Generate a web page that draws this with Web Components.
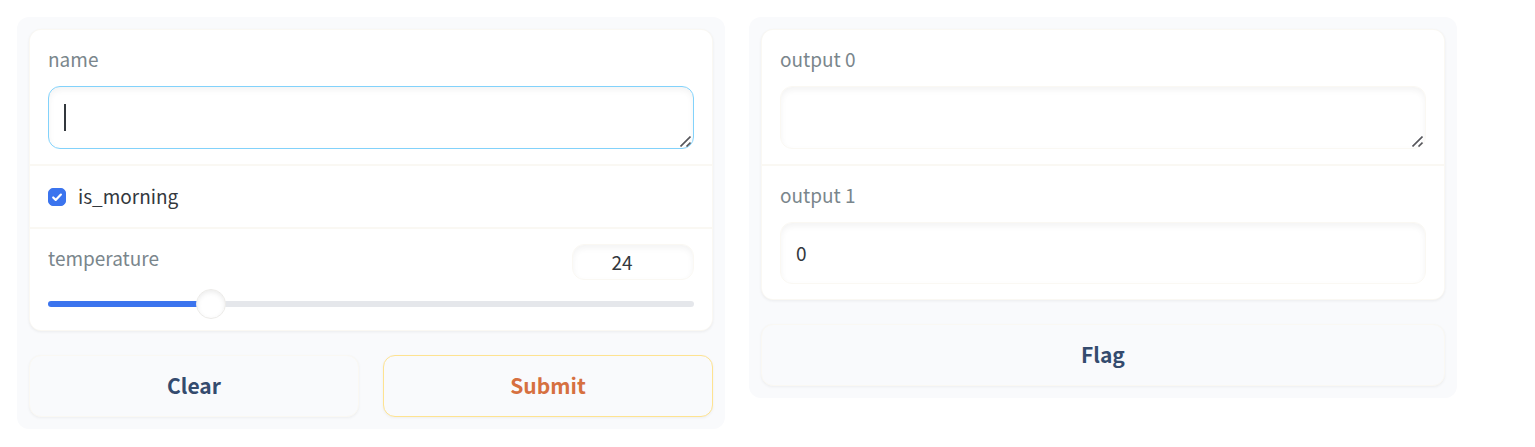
<!DOCTYPE html>
<html lang="en">
<head>
<meta charset="utf-8">
<meta name="viewport" content="width=device-width, initial-scale=1">
<title>Interface</title>
<style>
  body {
    margin: 0;
    background: #fff;
    color: #33383d;
    font-family: "Noto Sans CJK SC", "Noto Sans", sans-serif;
    font-size: 19px;
    line-height: 28px;
    --line: #faf8f3;
    --muted: #7a868c;
    --accent: #3b74ee;
    --inset: inset 0 3px 6px 0 rgba(0, 0, 0, .05);
  }
</style>
</head>
<body>
<demo-interface></demo-interface>
<script>
const define = (name, html, setup) => {
  const template = document.createElement('template');
  template.innerHTML = html;
  customElements.define(name, class extends HTMLElement {
    constructor() {
      super();
      this.attachShadow({ mode: 'open' }).append(template.content.cloneNode(true));
    }
    connectedCallback() {
      if (setup) setup(this, this.shadowRoot);
    }
  });
};

define('ui-panel', `
  <style>
    :host { display: block; flex: 1 1 0; min-width: 0; box-sizing: border-box; padding: 12px; border-radius: 12px; background: #f9fafc; }
    .form { display: flex; flex-direction: column; gap: 2px; overflow: hidden; border: 1px solid var(--line); border-radius: 12px; background: var(--line); box-shadow: 0 1px 3px rgba(0, 0, 0, .06); }
    .actions { display: flex; gap: 24px; margin-top: 24px; }
  </style>
  <div class="form"><slot></slot></div>
  <div class="actions"><slot name="actions"></slot></div>
`);

define('ui-button', `
  <style>
    :host { display: block; flex: 1 1 0; }
    button { display: block; box-sizing: border-box; width: 100%; height: 62px; padding: 0 0 2px; border: 1px solid var(--line); border-radius: 12px; background: #f9fafc; color: #344b6e; font: inherit; font-size: 21px; font-weight: 600; box-shadow: 0 1px 3px rgba(0, 0, 0, .05); cursor: pointer; }
    :host([primary]) button { border-color: #fee391; color: #d67040; }
  </style>
  <button type="button"><slot></slot></button>
`);

define('ui-textbox', `
  <style>
    :host { display: block; padding: 15px 18px; background: #fff; }
    label { display: block; margin-bottom: 13px; color: var(--muted); }
    .box { position: relative; }
    textarea { display: block; box-sizing: border-box; width: 100%; height: 63px; padding: 15px; border: 1px solid var(--line); border-radius: 12px; outline: 0; background: #fff; color: inherit; font: inherit; resize: none; box-shadow: var(--inset); caret-color: transparent; }
    .caret { display: none; position: absolute; left: 16px; top: 18px; width: 2px; height: 27px; background: #33383d; }
    svg { position: absolute; right: 3px; bottom: 2px; width: 11px; height: 11px; }
    :host([active]) textarea { border-color: #82d2fb; }
    :host([active]) .caret { display: block; }
  </style>
  <label for="field"></label>
  <div class="box">
    <textarea id="field" rows="1"></textarea>
    <span class="caret"></span>
    <svg viewBox="0 0 11 11" fill="none" stroke="#56565b" stroke-width="1.6" aria-hidden="true"><path d="M.5 10.5 10.5.5M6.5 10.5l4-4"/></svg>
  </div>
`, (host, root) => {
  root.querySelector('label').textContent = host.getAttribute('label');
});

define('ui-number', `
  <style>
    :host { display: block; padding: 15px 18px; background: #fff; }
    label { display: block; margin-bottom: 13px; color: var(--muted); }
    input { display: block; box-sizing: border-box; width: 100%; height: 62px; padding: 0 15px 2px; border: 1px solid var(--line); border-radius: 12px; outline: 0; background: #fff; color: inherit; font: inherit; box-shadow: var(--inset); appearance: textfield; }
    input::-webkit-inner-spin-button { appearance: none; margin: 0; }
  </style>
  <label for="field"></label>
  <input id="field" type="number">
`, (host, root) => {
  root.querySelector('label').textContent = host.getAttribute('label');
  root.querySelector('input').value = host.getAttribute('value');
});

define('ui-checkbox', `
  <style>
    :host { display: flex; align-items: center; box-sizing: border-box; height: 61px; padding: 0 18px; background: #fff; }
    label { display: flex; align-items: center; gap: 12px; }
    .tick { display: grid; width: 18px; height: 18px; }
    .text { padding-bottom: 2px; }
    input, svg { grid-area: 1 / 1; width: 18px; height: 18px; margin: 0; }
    input { appearance: none; border: 1px solid #d5d8dd; border-radius: 5px; box-sizing: border-box; }
    input:checked { border-color: var(--accent); background: var(--accent); }
    svg { visibility: hidden; pointer-events: none; }
    input:checked + svg { visibility: visible; }
  </style>
  <label>
    <span class="tick">
      <input type="checkbox" checked>
      <svg viewBox="0 0 18 18" fill="none" stroke="#fff" stroke-width="2.2" stroke-linecap="round" stroke-linejoin="round" aria-hidden="true"><path d="m5.2 9.5 2.5 2.4 5.2-5.3"/></svg>
    </span>
    <span class="text"><slot></slot></span>
  </label>
`);

define('ui-slider', `
  <style>
    :host { display: block; padding: 15px 18px 11px; background: #fff; }
    .head { display: flex; justify-content: space-between; align-items: flex-start; margin-bottom: 9px; }
    label { color: var(--muted); }
    input { display: block; box-sizing: border-box; margin: 0; outline: 0; }
    input[type=number] { width: 122px; height: 36px; padding: 0 22px 2px 0; border: 1px solid var(--line); border-radius: 12px; background: #fff; color: inherit; font: inherit; text-align: center; box-shadow: var(--inset); appearance: textfield; }
    input::-webkit-inner-spin-button { appearance: none; margin: 0; }
    input[type=range] { width: 100%; height: 30px; appearance: none; background: none; }
    input[type=range]::-webkit-slider-runnable-track { height: 6px; border-radius: 3px; background: linear-gradient(to right, var(--accent) var(--fill), #e5e7eb var(--fill)); }
    input[type=range]::-webkit-slider-thumb { appearance: none; width: 30px; height: 30px; margin-top: -12px; border: 1px solid #ecebe8; border-radius: 50%; background: #fff; box-shadow: inset 0 2px 5px rgba(0, 0, 0, .08); }
  </style>
  <div class="head">
    <label for="amount"></label>
    <input id="amount" type="number" min="0" max="100">
  </div>
  <input id="range" type="range" min="0" max="100">
`, (host, root) => {
  const amount = root.querySelector('#amount');
  const range = root.querySelector('#range');
  const label = host.getAttribute('label');
  const update = value => {
    amount.value = value;
    range.value = value;
    range.style.setProperty('--fill', value + '%');
  };
  root.querySelector('label').textContent = label;
  range.setAttribute('aria-label', label);
  amount.addEventListener('input', () => update(amount.value));
  range.addEventListener('input', () => update(range.value));
  update(host.getAttribute('value'));
});

define('demo-interface', `
  <style>
    :host { display: flex; align-items: flex-start; gap: 24px; padding: 17px 78px 17px 17px; }
  </style>
  <ui-panel>
    <ui-textbox label="name" active></ui-textbox>
    <ui-checkbox>is_morning</ui-checkbox>
    <ui-slider label="temperature" value="24"></ui-slider>
    <ui-button slot="actions">Clear</ui-button>
    <ui-button slot="actions" primary>Submit</ui-button>
  </ui-panel>
  <ui-panel>
    <ui-textbox label="output 0"></ui-textbox>
    <ui-number label="output 1" value="0"></ui-number>
    <ui-button slot="actions">Flag</ui-button>
  </ui-panel>
`);
</script>
</body>
</html>
